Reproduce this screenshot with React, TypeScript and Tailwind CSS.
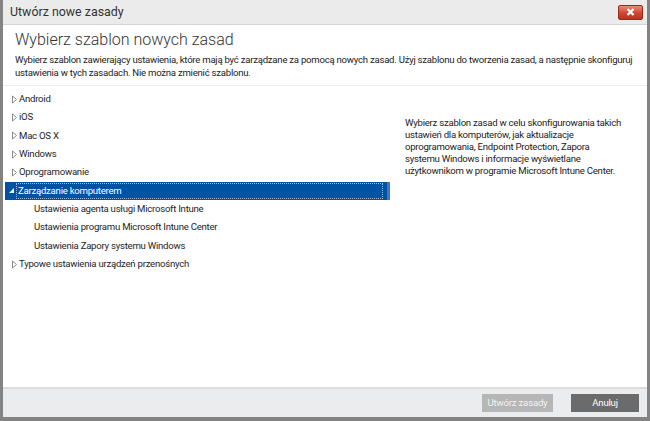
import React from "react";

const Arrow = ({ open }: { open?: boolean }) =>
  open ? (
    <svg width="7" height="7" viewBox="0 0 7 7" className="shrink-0">
      <polygon points="6,1 6,6 1,6" fill="#ffffff" />
    </svg>
  ) : (
    <svg width="7" height="9" viewBox="0 0 7 9" className="shrink-0">
      <polygon points="1.5,1 5.5,4.5 1.5,8" fill="none" stroke="#8a8a8a" strokeWidth="1" />
    </svg>
  );

const Row = ({ label }: { label: string }) => (
  <div className="flex h-[18.35px] items-center gap-[1px] pl-[6px]">
    <Arrow />
    <span>{label}</span>
  </div>
);

const Child = ({ label }: { label: string }) => (
  <div className="flex h-[18.35px] items-center pl-[29px]">
    <span>{label}</span>
  </div>
);

export default function App() {
  return (
    <div
      className="w-[650px] h-[421px] bg-[#838383] pl-[3px] pr-[3px] pb-[4px] flex flex-col text-[#1e1e1e]"
      style={{ fontFamily: 'Roboto, "Noto Sans", sans-serif' }}
    >
      <div className="flex-1 flex flex-col bg-white">
        <div className="h-[25px] bg-[#ebebeb] border-b border-[#d4d4d4] flex items-center justify-between pl-[7px] pr-[4px]">
          <span className="text-[12.4px] text-[#333]">Utwórz nowe zasady</span>
          <div className="w-[25px] h-[15px] rounded-[2px] bg-gradient-to-b from-[#e98a7a] via-[#d04a35] to-[#b93120] border border-[#9b2a1c] flex items-center justify-center">
            <svg width="9" height="8" viewBox="0 0 9 8">
              <path d="M1.5 1 L7.5 7 M7.5 1 L1.5 7" stroke="#fff" strokeWidth="2.2" />
            </svg>
          </div>
        </div>
        <div className="px-[12px] pt-[4px] pb-[6px] border-b border-[#ececec]">
          <div className="text-[16px] leading-[22px] text-[#333] font-light">Wybierz szablon nowych zasad</div>
          <div className="text-[9.6px] tracking-[-0.25px] leading-[13px] text-[#222] mt-[2px]">
            Wybierz szablon zawierający ustawienia, które mają być zarządzane za pomocą nowych zasad. Użyj szablonu do tworzenia zasad, a następnie skonfiguruj ustawienia w tych zasadach. Nie można zmienić szablonu.
          </div>
        </div>
        <div className="flex-1 flex">
          <div className="w-[387px] pl-[2px] pt-[4px] text-[9.6px] tracking-[-0.25px]">
            <Row label="Android" />
            <Row label="iOS" />
            <Row label="Mac OS X" />
            <Row label="Windows" />
            <Row label="Oprogramowanie" />
            <div className="h-[18.35px] bg-[#0052a3] flex items-center pl-[3px] text-white">
              <div className="flex items-center gap-[1px] h-[16px] flex-1 pr-[4px]">
                <Arrow open />
                <span className="border border-dotted border-[#9fbbe0] h-[16px] flex-1 flex items-center pl-[1px]">Zarządzanie komputerem</span>
              </div>
              <div className="w-[3px] h-full bg-[#3a78c0]" />
            </div>
            <Child label="Ustawienia agenta usługi Microsoft Intune" />
            <Child label="Ustawienia programu Microsoft Intune Center" />
            <Child label="Ustawienia Zapory systemu Windows" />
            <Row label="Typowe ustawienia urządzeń przenośnych" />
          </div>
          <div className="pl-[15px] pt-[31px]">
            <div className="w-[219px] text-[9.6px] tracking-[-0.25px] leading-[12px] text-[#222]">
              Wybierz szablon zasad w celu skonfigurowania takich ustawień dla komputerów, jak aktualizacje oprogramowania, Endpoint Protection, Zapora systemu Windows i informacje wyświetlane użytkownikom w programie Microsoft Intune Center.
            </div>
          </div>
        </div>
        <div className="h-[30px] bg-[#ebecee] border-t-2 border-[#dcdcdc] flex items-center justify-end gap-[18px] pr-[8px]">
          <div className="w-[71px] h-[18px] bg-[#b6b6b6] text-[#f2f2f2] text-[9.6px] tracking-[-0.2px] flex items-center justify-center">Utwórz zasady</div>
          <div className="w-[68px] h-[18px] bg-[#6b6b6b] text-white text-[9.6px] tracking-[-0.2px] flex items-center justify-center">Anuluj</div>
        </div>
      </div>
    </div>
  );
}
